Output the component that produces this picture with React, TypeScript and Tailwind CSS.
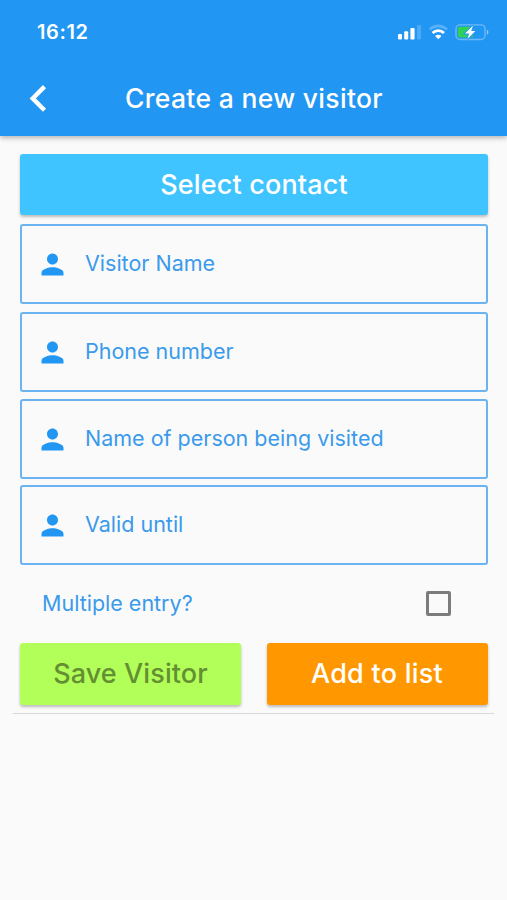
import { useState } from 'react';
import clsx from 'clsx';

const fields = [
  { id: 'name', label: 'Visitor Name', gap: 'mt-[9px]' },
  { id: 'phone', label: 'Phone number', gap: 'mt-2' },
  { id: 'host', label: 'Name of person being visited', gap: 'mt-[7px]' },
  { id: 'valid', label: 'Valid until', gap: 'mt-[6px]' },
];

function PersonIcon() {
  return (
    <svg viewBox="0 0 24 24" className="w-[33px] h-[33px] shrink-0" fill="#2196f3">
      <path d="M12 12c2.21 0 4-1.79 4-4s-1.79-4-4-4-4 1.79-4 4 1.79 4 4 4zm0 2c-2.67 0-8 1.34-8 4v2h16v-2c0-2.66-5.33-4-8-4z" />
    </svg>
  );
}

function StatusIcons() {
  return (
    <svg width="94" height="20" viewBox="0 0 94 20" fill="none">
      {/* Signal */}
      <rect x="2" y="12" width="4" height="5.5" rx="1" fill="#fff" />
      <rect x="8.2" y="9.3" width="4" height="8.2" rx="1" fill="#fff" />
      <rect x="14.4" y="6" width="4.2" height="11.5" rx="1" fill="#fff" />
      <rect x="21" y="3" width="4" height="14.5" rx="1" fill="#fff" fillOpacity="0.2" />

      {/* Wifi */}
      <path d="M33.7 7.6C38.5 2.8 46.1 2.8 50.9 7.6" stroke="#fff" strokeOpacity="0.25" strokeWidth="2.8" />
      <path d="M36.6 10.9C39.7 7.8 44.9 7.8 48 10.9" stroke="#fff" strokeWidth="2.8" />
      <path d="M39.1 14C40.9 12.2 43.7 12.2 45.5 14L42.3 17.3Z" fill="#fff" />

      {/* Battery */}
      <rect x="60" y="2.9" width="29" height="14.6" rx="4" stroke="#fff" strokeOpacity="0.35" strokeWidth="1.3" />
      <path d="M90.8 7.8v5c1-.4 1.6-1.3 1.6-2.5S91.8 8.2 90.8 7.8z" fill="#fff" fillOpacity="0.5" />
      <rect x="61.8" y="4.8" width="15.5" height="10.8" rx="2.2" fill="#30d158" />
      <path d="M77.1 3.6L69 11.4H73.2L71.4 17L79.4 9H75.1Z" fill="#fff" stroke="#2196f3" strokeWidth="2" paintOrder="stroke" />
    </svg>
  );
}

export default function App() {
  const [multiple, setMultiple] = useState(false);

  return (
    <div className="w-[507px] h-[900px] overflow-hidden bg-[#fafafa] font-['Inter',sans-serif] whitespace-nowrap">
      {/* App bar */}
      <header className="h-[136px] bg-[#2196f3] text-white shadow-[0_2px_5px_rgba(0,0,0,0.28)]">
        <div className="h-16 flex items-center justify-between pl-[37px] pr-[17px]">
          <span className="text-[20px] font-semibold leading-none tracking-[0.6px]">16:12</span>
          <StatusIcons />
        </div>
        <div className="h-[69px] flex items-center">
          <button className="ml-[28px] w-[20px]" aria-label="Back">
            <svg width="20" height="28" viewBox="0 0 20 28" fill="none" stroke="#fff" strokeWidth="4.4">
              <path d="M16.5 1.6L4.7 13.4L16.5 25.2" />
            </svg>
          </button>
          <h1 className="ml-[77px] text-[26.5px] font-medium leading-none tracking-[0.32px]">Create a new visitor</h1>
        </div>
      </header>

      <main className="pt-[18px] px-5">
        <button className="block w-[468px] h-[61px] pt-[2px] rounded-[3px] bg-[#40c4ff] text-white text-[27px] font-medium tracking-[0.15px] shadow-[0_2px_3px_rgba(0,0,0,0.25)]">
          Select contact
        </button>

        {fields.map((field) => (
          <div
            key={field.id}
            className={clsx('w-[468px] h-20 rounded-[3px] border-2 border-[#6bb4f1] flex items-center pl-[14px]', field.gap)}
          >
            <PersonIcon />
            <span className="ml-4 text-[21.5px] leading-none pb-px text-[#3b9aeb]">{field.label}</span>
          </div>
        ))}

        {/* Multiple entry */}
        <div className="h-[78px] flex items-center justify-between pl-[22px] pr-9">
          <span className="text-[21.5px] leading-none text-[#3b9aeb]">Multiple entry?</span>
          <button
            role="checkbox"
            aria-checked={multiple}
            aria-label="Multiple entry"
            onClick={() => setMultiple(!multiple)}
            className={clsx('w-[25px] h-[25px] mb-[2px] rounded-[2px] border-[3px] border-[#7c7c7c]', multiple && 'bg-[#2196f3]')}
          />
        </div>

        <div className="flex justify-between w-[468px]">
          <button className="w-[221px] h-[62px] pt-px rounded-[3px] bg-[#b2ff59] text-[#648f32] text-[27px] font-medium tracking-[0.1px] shadow-[0_2px_3px_rgba(0,0,0,0.25)]">
            Save Visitor
          </button>
          <button className="w-[221px] h-[62px] pt-px pr-px rounded-[3px] bg-[#ff9800] text-white text-[27px] font-medium tracking-[0.25px] shadow-[0_2px_3px_rgba(0,0,0,0.25)]">
            Add to list
          </button>
        </div>
        <div className="mt-2 -mx-[7px] h-px bg-[#d8d8d8]" />
      </main>
    </div>
  );
}
